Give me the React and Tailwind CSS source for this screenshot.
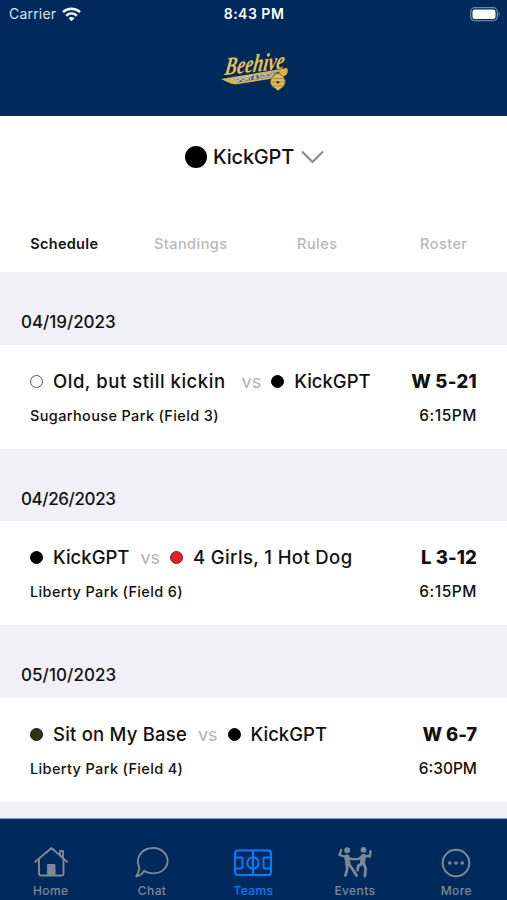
import React from "react";

const games = [
  {
    date: "04/19/2023",
    dateTracking: "tracking-[-0.05px]",
    home: { name: "Old, but still kickin", dot: "bg-white border-[#555]", tracking: "tracking-[0.53px]" },
    away: { name: "KickGPT", dot: "bg-black border-black", tracking: "tracking-normal" },
    vsGap: "ml-[16px] mr-[10px]",
    result: "W 5-21",
    resultTracking: "tracking-[0.3px]",
    place: "Sugarhouse Park (Field 3)",
    time: "6:15PM",
    timeTracking: "tracking-[0.55px]",
    bandHeight: "h-[73px]",
  },
  {
    date: "04/26/2023",
    dateTracking: "tracking-[-0.4px]",
    home: { name: "KickGPT", dot: "bg-black border-black", tracking: "tracking-normal" },
    away: { name: "4 Girls, 1 Hot Dog", dot: "bg-[#e3202b] border-[#7d1a1f]", tracking: "tracking-[0.37px]" },
    vsGap: "ml-[11px] mr-[10px]",
    result: "L 3-12",
    resultTracking: "tracking-[0.1px]",
    place: "Liberty Park (Field 6)",
    time: "6:15PM",
    timeTracking: "tracking-[0.55px]",
    bandHeight: "h-[72px]",
  },
  {
    date: "05/10/2023",
    dateTracking: "tracking-[0.05px]",
    home: { name: "Sit on My Base", dot: "bg-[#2e3414] border-[#171a0a]", tracking: "tracking-[0.2px]" },
    away: { name: "KickGPT", dot: "bg-black border-black", tracking: "tracking-normal" },
    vsGap: "ml-[11px] mr-[10px]",
    result: "W 6-7",
    resultTracking: "tracking-[-0.1px]",
    place: "Liberty Park (Field 4)",
    time: "6:30PM",
    timeTracking: "tracking-normal",
    bandHeight: "h-[73px]",
  },
];

const StatusBar = () => (
  <div className="grid h-7 grid-cols-3 items-center pr-[6px] pl-[9px] text-white">
    <div className="flex items-center gap-[6px]">
      <span className="text-[14px] leading-none tracking-[0.2px] text-[#dbe3ee]">Carrier</span>
      <svg width="19" height="15" viewBox="0 0 19 15" fill="none" stroke="#f4f7fb" strokeWidth="2.5">
        <path d="M1 5.2C5.8 0.7 13.2 0.7 18 5.2" />
        <path d="M4.2 8.7C7.3 5.9 11.7 5.9 14.8 8.7" />
        <path d="M9.5 14.2L6.5 11.2C8.2 9.7 10.8 9.7 12.5 11.2Z" fill="#f4f7fb" stroke="none" />
      </svg>
    </div>
    <span className="mr-[2px] text-center text-[14px] leading-none font-semibold tracking-[0.5px] whitespace-nowrap">8:43 PM</span>
    <svg className="justify-self-end" width="31" height="15" viewBox="0 0 31 15">
      <rect x="0.7" y="0.7" width="26.6" height="13" rx="4" fill="none" stroke="#7187a6" strokeWidth="1.3" />
      <rect x="2.5" y="2.5" width="23" height="9.5" rx="2.3" fill="white" />
      <path d="M28.6 5Q31 7.2 28.6 9.4Z" fill="#7187a6" />
    </svg>
  </div>
);

const Logo = () => (
  <svg className="overflow-visible" width="72" height="46" viewBox="0 0 72 46">
    <path d="M3 31L69 20C71 24 69 28 64 29L20 36C13 37 10 34 3 31Z" fill="#d9b54b" />
    <path d="M16 30.5L62 23.5L60 28L19 34.5Z" fill="#53627a" />
    <g transform="translate(6 27) rotate(-6) skewX(-14)">
      <text x="0" y="0" textLength="60" lengthAdjust="spacingAndGlyphs" fontFamily="Liberation Serif, serif" fontStyle="italic" fontWeight="bold" fontSize="25" fill="#e7c253" stroke="#0b2748" strokeWidth="0.8" paintOrder="stroke">Beehive</text>
    </g>
    <text x="17" y="34.4" transform="rotate(-8.5 17 34.4)" textLength="43" lengthAdjust="spacingAndGlyphs" fontFamily="Liberation Sans, sans-serif" fontStyle="italic" fontWeight="bold" fontSize="6" fill="#e5e5df">SPORT &amp; SOCIAL</text>
    <path d="M57 26.5Q60 23.5 63 26.5Q67 29 67.5 34Q67 38.5 63 40.5L60 43L57 40.5Q52.5 38.5 52 34Q53 29 57 26.5Z" fill="#dfbd50" stroke="#0b2748" strokeWidth="0.6" />
    <path d="M54.5 30.5H65.5M52.5 34H67.5M54 38H66" stroke="#8a7840" strokeWidth="0.7" />
    <circle cx="60" cy="34.3" r="1.3" fill="#243650" />
  </svg>
);

const Dot = ({ color }) => <span className={`size-[13px] shrink-0 rounded-full border ${color}`} />;

const Game = ({ game }) => (
  <section>
    <div className={`${game.bandHeight} bg-[#f0f0f5] pt-[37px] pl-[21px]`}>
      <h2 className={`text-[17px] leading-[26px] font-medium ${game.dateTracking}`}>{game.date}</h2>
    </div>
    <div className="h-[104px] bg-white pt-[23px] pr-[30px] pl-[30px]">
      <div className="flex h-[27px] items-center whitespace-nowrap">
        <Dot color={game.home.dot} />
        <span className={`ml-[10px] text-[18.5px] font-medium ${game.home.tracking}`}>{game.home.name}</span>
        <span className={`${game.vsGap} text-[18px] text-[#b2b2b2]`}>vs</span>
        <Dot color={game.away.dot} />
        <span className={`ml-[10px] text-[18.5px] font-medium ${game.away.tracking}`}>{game.away.name}</span>
        <span className={`ml-auto text-[18.5px] font-extrabold ${game.resultTracking}`}>{game.result}</span>
      </div>
      <div className="mt-[8px] flex h-[25px] items-center justify-between">
        <span className="text-[14.5px] font-medium tracking-[0.36px]">{game.place}</span>
        <span className={`text-[15.5px] font-medium ${game.timeTracking}`}>{game.time}</span>
      </div>
    </div>
  </section>
);

const HomeIcon = () => (
  <svg width="36" height="34" viewBox="0 0 36 34" fill="none" stroke="currentColor" strokeWidth="1.9" strokeLinejoin="round" strokeLinecap="round">
    <path d="M2.3 15.8L18.5 2L34 15.8M6 13.5V27.5Q6 29.5 8 29.5H28.5Q30.5 29.5 30.5 27.5V13.5M27 8.5V5H30V11.5" />
    <path d="M15 29V19H21.5V29Z" fill="currentColor" />
  </svg>
);

const ChatIcon = () => (
  <svg width="34" height="34" viewBox="0 0 34 34" fill="none" stroke="currentColor" strokeWidth="1.9" strokeLinejoin="round">
    <path d="M4.3 21.5C-0.3 11.5 7 2 18 2C26.2 2 32.6 7.6 32.6 14.8C32.6 22.2 26.2 27.4 18 27.4C14.6 27.4 11.6 26.6 9.2 24.8C7.2 28 4.3 30.2 1.2 30.4C3 28 4.1 24.7 4.3 21.5Z" />
  </svg>
);

const TeamsIcon = () => (
  <svg width="38" height="34" viewBox="0 0 38 34" fill="none" stroke="currentColor" strokeWidth="2">
    <rect x="1" y="4.5" width="36" height="24.5" rx="3" />
    <path d="M19 4.5V29M1 11.5H7Q8.5 11.5 8.5 13V21Q8.5 22.5 7 22.5H1M37 11.5H31Q29.5 11.5 29.5 13V21Q29.5 22.5 31 22.5H37" />
    <circle cx="19" cy="17" r="5.7" />
  </svg>
);

const EventsIcon = () => (
  <svg width="36" height="34" viewBox="0 0 36 34" fill="none" stroke="currentColor" strokeLinecap="round" strokeLinejoin="round">
    <circle cx="10.2" cy="4.2" r="2.9" fill="currentColor" stroke="none" />
    <circle cx="26.5" cy="3.8" r="2.9" fill="currentColor" stroke="none" />
    <path d="M4.2 4L2.5 9L9 11L15 13.2L21.5 13.2L26 9.5L32.8 10.5L33.5 5" strokeWidth="2.3" />
    <path d="M9.8 11L11 17.5M26.3 10.5L25.5 16.5" strokeWidth="5.2" />
    <path d="M9.8 18L10.2 23L8.5 29.5M12 18.5L15.5 23L19.5 29.5M24.5 18L21.2 20L20.5 24M26.8 17.5L28.7 23L27.8 30" strokeWidth="2.8" />
  </svg>
);

const MoreIcon = () => (
  <svg width="30" height="34" viewBox="0 0 30 34" fill="none" stroke="currentColor" strokeWidth="2">
    <circle cx="15" cy="17" r="13.3" />
    <g fill="currentColor" stroke="none">
      <circle cx="8.8" cy="17" r="1.8" />
      <circle cx="15" cy="17" r="1.8" />
      <circle cx="21.2" cy="17" r="1.8" />
    </g>
  </svg>
);

const navItems = [
  { label: "Home", Icon: HomeIcon },
  { label: "Chat", Icon: ChatIcon },
  { label: "Teams", Icon: TeamsIcon, active: true },
  { label: "Events", Icon: EventsIcon },
  { label: "More", Icon: MoreIcon },
];

const App = () => {
  return (
    <div className="flex h-[900px] w-[507px] flex-col overflow-hidden bg-[#f0f0f5] font-['Inter',sans-serif] text-[#111]">
      <header className="h-[116px] shrink-0 bg-[#002a5c]">
        <StatusBar />
        <div className="flex justify-center pt-[20px]">
          <Logo />
        </div>
      </header>

      <div className="h-[156px] shrink-0 bg-white">
        <div className="flex h-[81px] items-center justify-center pl-[2px]">
          <span className="size-[22px] rounded-full bg-black" />
          <h1 className="ml-[6px] text-[20px] font-medium tracking-[-0.2px]">KickGPT</h1>
          <svg className="ml-[7px]" width="23" height="14" viewBox="0 0 23 14" fill="none" stroke="#8c8c8c" strokeWidth="2.2">
            <path d="M1 1.5L11.5 12L22 1.5" />
          </svg>
        </div>
        <nav className="mt-[37px] grid grid-cols-4 pl-px text-center text-[14.5px] leading-5 font-medium tracking-[0.45px] text-[#b8b8b8]">
          <span className="font-semibold tracking-[0.3px] text-[#111]">Schedule</span>
          <span>Standings</span>
          <span>Rules</span>
          <span>Roster</span>
        </nav>
      </div>

      <main className="h-[546px] shrink-0 overflow-hidden">
        {games.map((game) => (
          <Game key={game.date} game={game} />
        ))}
      </main>

      <footer className="grid flex-1 grid-cols-5 border-t border-[#8a96b2] bg-[#002a5c] pt-[27px]">
        {navItems.map(({ label, Icon, active }) => (
          <div key={label} className={`flex flex-col items-center ${active ? "text-[#087cff]" : "text-[#7e8897]"}`}>
            <Icon />
            <span className="mt-[3px] text-[12px] leading-[15px] font-medium tracking-[0.4px]">{label}</span>
          </div>
        ))}
      </footer>
    </div>
  );
};

export default App;
